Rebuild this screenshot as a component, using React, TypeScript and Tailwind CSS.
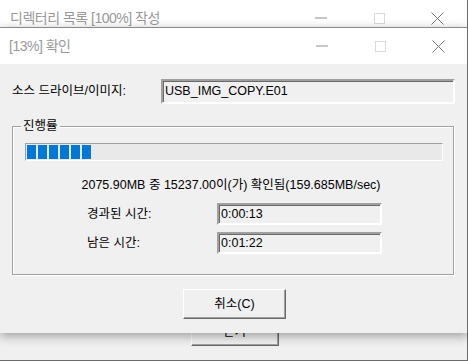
import React from "react";

const FONT = { fontFamily: '"Liberation Sans", "Noto Sans CJK KR", sans-serif' };

function CaptionButtons() {
  return (
    <div className="flex h-full">
      <div className="w-[58px] h-full flex items-center justify-center">
        <svg width="12" height="2" viewBox="0 0 12 2">
          <line x1="0" y1="1" x2="12" y2="1" stroke="#8f8f8f" strokeWidth="1" />
        </svg>
      </div>
      <div className="w-[58px] h-full flex items-center justify-center">
        <svg width="11" height="11" viewBox="0 0 11 11">
          <rect x="0.5" y="0.5" width="10" height="10" fill="none" stroke="#dadada" strokeWidth="1" />
        </svg>
      </div>
      <div className="w-[58px] h-full flex items-center justify-center">
        <svg width="13" height="13" viewBox="0 0 13 13">
          <path d="M0.5 0.5 L12.5 12.5 M12.5 0.5 L0.5 12.5" stroke="#7a7a7a" strokeWidth="1" fill="none" />
        </svg>
      </div>
    </div>
  );
}

function SunkenBox({ children, className }: { children: React.ReactNode; className: string }) {
  return (
    <div
      className={
        "flex items-center border-t-2 border-l-2 border-b-2 border-r-2 border-t-[#a0a0a0] border-l-[#a0a0a0] border-b-white border-r-white bg-[#f0f0f0] shadow-[inset_1px_1px_0_#696969] pl-[2px] text-[12.5px] text-black " +
        className
      }
    >
      {children}
    </div>
  );
}

export default function App() {
  return (
    <div className="relative w-[468px] h-[362px] overflow-hidden bg-white" style={FONT}>
      {/* Background window */}
      <div className="w-[468px] h-[361px] flex flex-col border-r border-b border-[#6a6a6a] bg-[#f0f0f0]">
        <div className="h-[27px] bg-white flex items-center justify-between pt-[9px]">
          <div className="pl-[10px] text-[14px] tracking-[-0.5px] text-[#999999]">디렉터리 목록 [100%] 작성</div>
          <div className="h-full pr-[1px]">
            <CaptionButtons />
          </div>
        </div>
        <div className="flex-1 flex items-end justify-center pb-[14px]">
          <div className="w-[88px] h-[28px] ml-[2px] flex items-center justify-center border border-t-white border-l-white border-b-[#696969] border-r-[#696969] shadow-[inset_-1px_-1px_0_#a0a0a0] text-[12.5px] text-black">
            닫기
          </div>
        </div>
      </div>

      {/* Foreground dialog */}
      <div className="absolute left-0 top-[27px] w-[468px] h-[306px] flex flex-col bg-[#f0f0f0] border-t border-r border-t-[#8a8a8a] border-r-[#6a6a6a] shadow-[0_3px_10px_rgba(0,0,0,0.35)]">
        <div className="h-[36px] bg-white flex items-center justify-between">
          <div className="pl-[9px] text-[14px] tracking-[-0.5px] text-[#999999]">[13%] 확인</div>
          <div className="h-full">
            <CaptionButtons />
          </div>
        </div>

        <div className="flex flex-col px-[12px] pt-[15px] text-[12.5px] text-black">
          <div className="flex items-center">
            <div className="w-[149px]">소스 드라이브/이미지:</div>
            <SunkenBox className="w-[294px] h-[25px]">USB_IMG_COPY.E01</SunkenBox>
          </div>

          <div className="relative mt-[22px] w-[442px] h-[149px] border border-[#a0a0a0] shadow-[inset_1px_1px_0_#ffffff,1px_1px_0_#ffffff] flex flex-col px-[12px] pt-[16px]">
            <div className="absolute left-[8px] -top-[9px] px-[2px] bg-[#f0f0f0] leading-[16px]">진행률</div>
            <div className="w-[418px] h-[18px] border border-t-[#a0a0a0] border-l-[#a0a0a0] border-b-white border-r-white bg-[#e9e9e9] flex items-center gap-[2px] pl-[1px]">
              {[0, 1, 2, 3, 4, 5].map((i) => (
                <div key={i} className="w-[9px] h-[14px] bg-[#0078d7]" />
              ))}
            </div>
            <div className="mt-[16px] text-center leading-[16px] pr-[4px]">
              2075.90MB 중 15237.00이(가) 확인됨(159.685MB/sec)
            </div>
            <div className="mt-[10px] flex items-center">
              <div className="w-[192px] pl-[62px]">경과된 시간:</div>
              <SunkenBox className="w-[165px] h-[22px]">0:00:13</SunkenBox>
            </div>
            <div className="mt-[7px] flex items-center">
              <div className="w-[192px] pl-[62px]">남은 시간:</div>
              <SunkenBox className="w-[165px] h-[22px]">0:01:22</SunkenBox>
            </div>
          </div>

          <div className="mt-[14px] flex justify-center">
            <div className="w-[103px] h-[30px] ml-[2px] flex items-center justify-center border border-t-white border-l-white border-b-[#696969] border-r-[#696969] shadow-[inset_-1px_-1px_0_#a0a0a0] bg-[#f0f0f0]">
              취소(C)
            </div>
          </div>
        </div>
      </div>
    </div>
  );
}
